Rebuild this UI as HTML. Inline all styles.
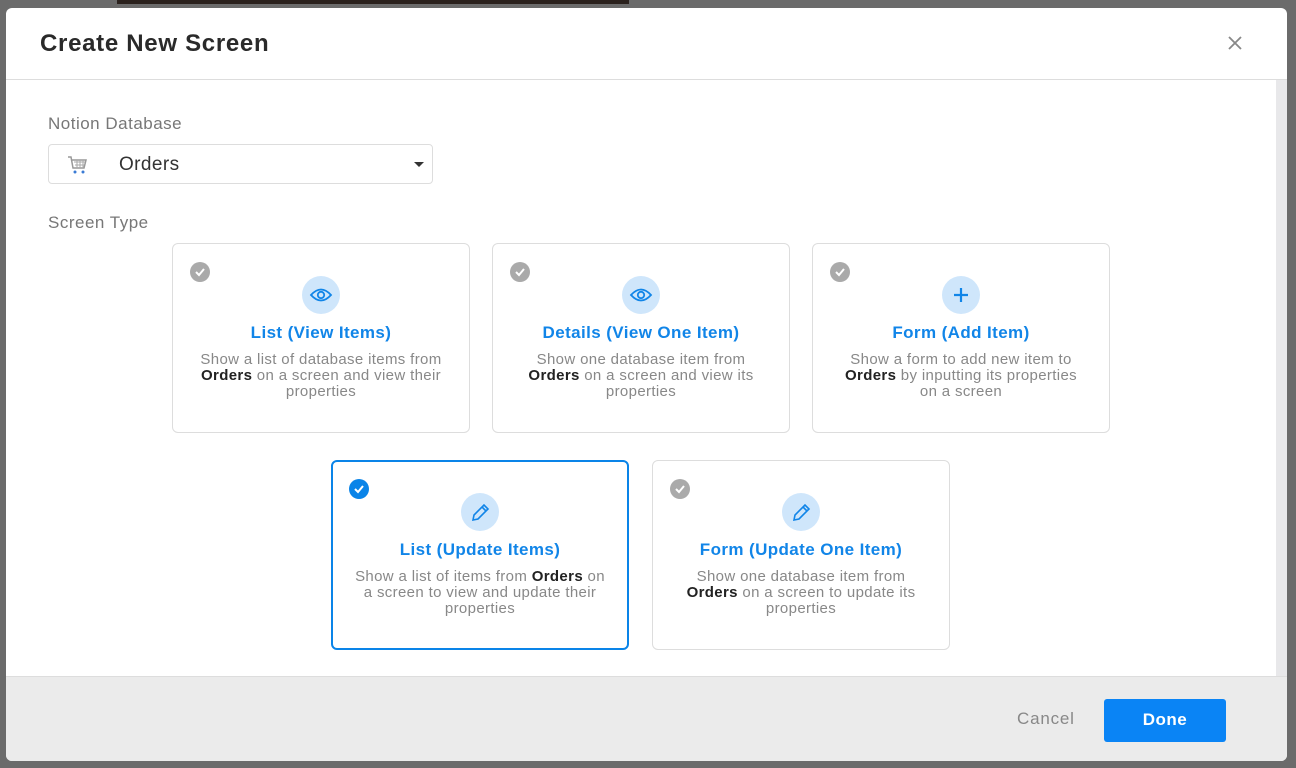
<!DOCTYPE html>
<html><head><style>
*{box-sizing:border-box;margin:0;padding:0}
body{width:1296px;height:768px;background:#6b6b6b;font-family:"Liberation Sans",sans-serif;position:relative;overflow:hidden}
.topbar{position:absolute;left:117px;top:0;width:512px;height:4px;background:#2a211d}
.modal{position:absolute;left:6px;top:8px;width:1281px;height:753px;background:#fff;border-radius:6px;overflow:hidden}
.hdr{height:72px;border-bottom:1px solid #ddd;position:relative}
.hdr h1{position:absolute;left:34px;top:22px;font-size:24px;font-weight:bold;color:#2a2a2a;letter-spacing:.7px}
.x{position:absolute;left:1221px;top:27px;width:16px;height:16px}
.scroll{position:absolute;left:1270px;top:72px;width:11px;height:596px;background:#e8e8ea}
.lbl{position:absolute;font-size:17px;color:#777;letter-spacing:.5px}
.sel{position:absolute;left:42px;top:136px;width:385px;height:40px;border:1px solid #ddd;border-radius:4px}
.sel span{position:absolute;left:70px;top:9px;font-size:19px;color:#333;letter-spacing:.4px}
.caret{position:absolute;right:8px;top:17px;border:5px solid transparent;border-top:5px solid #333}
.card{position:absolute;width:298px;height:190px;border:1px solid #ddd;border-radius:6px;text-align:center}
.card.on{border:2px solid #0a84e8}
.chk{position:absolute;left:17px;top:18px;width:20px;height:20px;border-radius:50%;background:#aaa}
.on .chk{background:#0a84e8;left:16px;top:17px}
.ic{position:absolute;left:129px;top:32px;width:38px;height:38px;border-radius:50%;background:#cfe6fb}
.t{position:absolute;left:0;right:0;top:79px;font-size:17px;font-weight:bold;letter-spacing:.4px;color:#1185e8;white-space:nowrap}
.d{position:absolute;left:0;right:0;top:108px;font-size:15px;letter-spacing:.35px;line-height:16px;color:#888;white-space:nowrap}
.d b{color:#222;font-weight:bold}
.ftr{position:absolute;left:0;top:668px;width:1281px;height:85px;background:#ebebeb;border-top:1px solid #ddd}
.cancel{position:absolute;left:1011px;top:32px;font-size:17px;color:#888;letter-spacing:.8px}
.done{position:absolute;left:1098px;top:22px;width:122px;height:43px;background:#0a84f5;border-radius:3px;color:#fff;font-size:17px;font-weight:bold;letter-spacing:.5px;text-align:center;line-height:42px}
</style></head><body>
<div class="topbar"></div>
<div class="modal">
<div class="hdr"><h1>Create New Screen</h1>
<svg class="x" viewBox="0 0 16 16"><path d="M2 2L14 14M14 2L2 14" stroke="#888" stroke-width="1.8"/></svg></div>
<div class="scroll"></div>
<div class="lbl" style="left:42px;top:106px">Notion Database</div>
<div class="sel"><svg style="position:absolute;left:18px;top:10px" width="22" height="20" viewBox="0 0 22 20"><path d="M1 2h3l2 11h11l2-8H5" fill="none" stroke="#999" stroke-width="1.5"/><path d="M7 7h11M8 10h9M10 5v8M13 5v8M16 5v8" stroke="#aaa"/><circle cx="8" cy="17" r="1.5" fill="#3a7bd5"/><circle cx="16" cy="17" r="1.5" fill="#3a7bd5"/></svg><span>Orders</span><div class="caret"></div></div>
<div class="lbl" style="left:42px;top:205px">Screen Type</div>

<div class="card" style="left:166px;top:235px"><div class="chk"><svg width="20" height="20"><path d="M6 10l3 3 5-6" stroke="#fff" stroke-width="2" fill="none"/></svg></div><div class="ic"><svg width="38" height="38"><path d="M9 19q10-11 20 0q-10 11-20 0z" stroke="#1185e8" stroke-width="1.8" fill="none"/><circle cx="19" cy="19" r="3.2" stroke="#1185e8" stroke-width="1.8" fill="none"/></svg></div><div class="t">List (View Items)</div><div class="d">Show a list of database items from<br><b>Orders</b> on a screen and view their<br>properties</div></div>

<div class="card" style="left:486px;top:235px"><div class="chk"><svg width="20" height="20"><path d="M6 10l3 3 5-6" stroke="#fff" stroke-width="2" fill="none"/></svg></div><div class="ic"><svg width="38" height="38"><path d="M9 19q10-11 20 0q-10 11-20 0z" stroke="#1185e8" stroke-width="1.8" fill="none"/><circle cx="19" cy="19" r="3.2" stroke="#1185e8" stroke-width="1.8" fill="none"/></svg></div><div class="t">Details (View One Item)</div><div class="d">Show one database item from<br><b>Orders</b> on a screen and view its<br>properties</div></div>

<div class="card" style="left:806px;top:235px"><div class="chk"><svg width="20" height="20"><path d="M6 10l3 3 5-6" stroke="#fff" stroke-width="2" fill="none"/></svg></div><div class="ic"><svg width="38" height="38"><path d="M19 12v14M12 19h14" stroke="#1185e8" stroke-width="2.2"/></svg></div><div class="t">Form (Add Item)</div><div class="d">Show a form to add new item to<br><b>Orders</b> by inputting its properties<br>on a screen</div></div>

<div class="card on" style="left:325px;top:452px"><div class="chk"><svg width="20" height="20"><path d="M6 10l3 3 5-6" stroke="#fff" stroke-width="2" fill="none"/></svg></div><div class="ic" style="left:128px;top:31px"><svg width="38" height="38"><path d="M12 27l1-5 10-10 4 4-10 10z M21 14l4 4" stroke="#1185e8" stroke-width="1.6" fill="none"/></svg></div><div class="t" style="top:78px">List (Update Items)</div><div class="d" style="top:107px">Show a list of items from <b>Orders</b> on<br>a screen to view and update their<br>properties</div></div>

<div class="card" style="left:646px;top:452px"><div class="chk"><svg width="20" height="20"><path d="M6 10l3 3 5-6" stroke="#fff" stroke-width="2" fill="none"/></svg></div><div class="ic"><svg width="38" height="38"><path d="M12 27l1-5 10-10 4 4-10 10z M21 14l4 4" stroke="#1185e8" stroke-width="1.6" fill="none"/></svg></div><div class="t">Form (Update One Item)</div><div class="d">Show one database item from<br><b>Orders</b> on a screen to update its<br>properties</div></div>

<div class="ftr"><div class="cancel">Cancel</div><div class="done">Done</div></div>
</div>
</body></html>
